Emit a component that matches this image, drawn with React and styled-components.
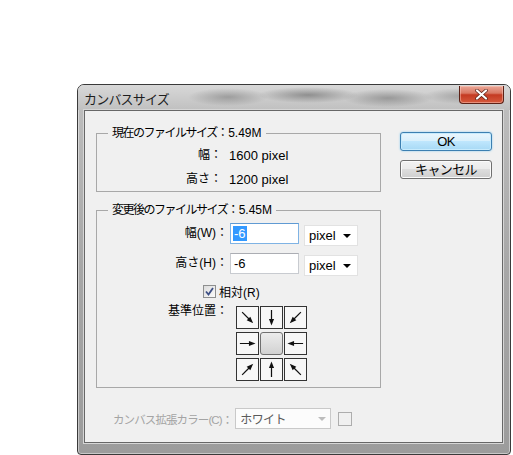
import React from "react";
import styled, { createGlobalStyle } from "styled-components";

const GlobalStyle = createGlobalStyle`
  html, body {
    margin: 0;
    padding: 0;
    background: #fff;
  }
  body {
    font-family: "Liberation Sans", "Noto Sans CJK JP", sans-serif;
    font-size: 12px;
    color: #000;
  }
`;

const Window = styled.div`
  margin: 84px 0 0 77px;
  width: 434px;
  height: 371px;
  box-sizing: border-box;
  border: 1px solid #3a3a3a;
  border-radius: 7px 7px 4px 4px;
  background: linear-gradient(to bottom, #d0d0d0 0, #bcbcbc 26px, #a7a7a7 50%, #9c9c9c 100%);
  box-shadow: inset 0 0 0 1px rgba(255, 255, 255, 0.45);
  display: flex;
  flex-direction: column;
  overflow: hidden;
`;

const TitleBar = styled.div`
  height: 25px;
  flex: none;
  display: flex;
  justify-content: space-between;
  align-items: flex-start;
  padding-left: 6px;
  background:
    radial-gradient(ellipse 40px 9px at 150px 12px, rgba(100, 100, 100, 0.45), transparent),
    radial-gradient(ellipse 50px 8px at 230px 10px, rgba(80, 80, 80, 0.5), transparent),
    radial-gradient(ellipse 45px 9px at 310px 13px, rgba(90, 90, 90, 0.45), transparent),
    radial-gradient(ellipse 40px 8px at 385px 11px, rgba(100, 100, 100, 0.4), transparent),
    linear-gradient(to bottom, #d8d8d8, #c0c0c0);
`;

const Title = styled.div`
  font-family: "Noto Sans CJK JP", sans-serif;
  font-size: 13px;
  line-height: 18px;
  padding-top: 5px;
  color: #1e1e1e;
  letter-spacing: -0.8px;
`;

const CloseButton = styled.div`
  width: 45px;
  height: 18px;
  margin: 1px 6px 0 0;
  box-sizing: border-box;
  border: 1px solid #5c2116;
  border-top: none;
  border-radius: 0 0 4px 4px;
  background: linear-gradient(to bottom, #eaa797 0%, #d97863 42%, #c43a22 52%, #d65a3d 100%);
  box-shadow: inset 0 0 0 1px rgba(255, 210, 200, 0.45);
  display: flex;
  align-items: center;
  justify-content: center;
`;

const Client = styled.div`
  flex: none;
  height: 333px;
  margin: 0 7px 0 6px;
  box-sizing: border-box;
  border: 1px solid #676767;
  box-shadow: 0 0 0 1px #d6d6d6;
  background: #f0f0f0;
  padding: 22px 0 0 11px;
  display: flex;
  flex-direction: column;
`;

const TopArea = styled.div`
  display: flex;
  align-items: flex-start;
  gap: 19px;
`;

const LeftColumn = styled.div`
  width: 285px;
  display: flex;
  flex-direction: column;
`;

const Group = styled.div`
  position: relative;
  box-sizing: border-box;
  height: ${(p) => p.$h}px;
  margin-top: ${(p) => p.$mt || 0}px;
  border: 1px solid #a8a8a8;
  padding-top: ${(p) => p.$pt}px;
`;

const Legend = styled.div`
  position: absolute;
  top: -8px;
  left: 11px;
  padding: 0 4px;
  background: #f0f0f0;
  line-height: 15px;
  white-space: nowrap;
`;

const Tight = styled.span`
  letter-spacing: -1.5px;
`;

const Number = styled.span`
  font-size: 12px;
  margin-left: 1px;
`;

const InfoRow = styled.div`
  display: grid;
  grid-template-columns: 125px auto;
  column-gap: 7px;
  height: 24px;
  align-items: center;
`;

const Value = styled.span`
  font-size: 13px;
`;

const Label = styled.div`
  text-align: right;
  white-space: nowrap;
  line-height: ${(p) => p.$lh || 15}px;
`;

const FormGrid = styled.div`
  display: grid;
  grid-template-columns: 131px 69px 57px;
  column-gap: 2px;
  row-gap: 7px;
  align-items: start;
`;

const TextInput = styled.div`
  height: 21px;
  box-sizing: border-box;
  border: 1px solid ${(p) => (p.$focus ? "#7fb3e4" : "#c8cbd0")};
  border-top-color: ${(p) => (p.$focus ? "#5f9ad3" : "#abadb3")};
  background: #fff;
  padding-left: 2px;
  display: flex;
  align-items: center;
`;

const InputText = styled.span`
  font-size: 13px;
  line-height: 15px;
  padding: 0 1px;
  color: ${(p) => (p.$sel ? "#fff" : "#000")};
  background: ${(p) => (p.$sel ? "#3399ff" : "transparent")};
`;

const Select = styled.div`
  margin: 2px 0 0 3px;
  width: 54px;
  height: 21px;
  box-sizing: border-box;
  border: 1px solid #e2e2e2;
  background: #fff;
  display: flex;
  align-items: center;
  justify-content: space-between;
  padding: 0 6px 0 4px;
  font-size: 13px;
`;

const Caret = styled.span`
  width: 0;
  height: 0;
  border-left: 4px solid transparent;
  border-right: 4px solid transparent;
  border-top: 4px solid ${(p) => p.$c || "#000"};
`;

const CheckRow = styled.div`
  grid-column: 1 / -1;
  height: 16px;
  padding-left: 106px;
  display: flex;
  align-items: center;
  gap: 3px;
`;

const CheckBox = styled.div`
  width: 13px;
  height: 13px;
  box-sizing: border-box;
  border: 1px solid #8e8f8f;
  background: linear-gradient(135deg, #dcdcdc, #fbfbfb);
  display: flex;
  align-items: center;
  justify-content: center;
`;

const AnchorLabel = styled(Label)`
  margin-top: -2px;
`;

const AnchorGrid = styled.div`
  grid-column: 2 / -1;
  margin-left: 6px;
  display: grid;
  grid-template-columns: repeat(3, 23px);
  grid-auto-rows: 23px;
  column-gap: 1px;
  row-gap: 3px;
`;

const Cell = styled.div`
  box-sizing: border-box;
  border: 1px solid ${(p) => (p.$center ? "#707070" : "#333")};
  border-radius: ${(p) => (p.$center ? "3px" : "0")};
  background: ${(p) => (p.$center ? "linear-gradient(to bottom, #ececec, #d2d2d2)" : "#f7f7f7")};
  display: flex;
  align-items: center;
  justify-content: center;
`;

const ButtonColumn = styled.div`
  width: 92px;
  margin-top: -1px;
  display: flex;
  flex-direction: column;
  gap: 9px;
`;

const Button = styled.div`
  height: 19px;
  box-sizing: border-box;
  border: 1px solid ${(p) => (p.$default ? "#3c7fb1" : "#707070")};
  border-radius: 3px;
  background: ${(p) =>
    p.$default
      ? "linear-gradient(to bottom, #eaf6fd 0%, #d9f0fc 45%, #bee6fd 50%, #a7d9f5 100%)"
      : "linear-gradient(to bottom, #f2f2f2 0%, #ebebeb 45%, #dddddd 50%, #cfcfcf 100%)"};
  box-shadow: ${(p) => (p.$default ? "0 0 2px #7ac6f0, inset 0 0 0 1px #c7ebfd" : "inset 0 0 0 1px #fbfbfb")};
  display: flex;
  align-items: center;
  justify-content: center;
  font-size: 13px;
  line-height: 15px;
  letter-spacing: -0.6px;
`;

const BottomRow = styled.div`
  margin-top: 20px;
  padding-left: 17px;
  display: flex;
  align-items: center;
  gap: 3px;
`;

const DisabledLabel = styled.div`
  color: #a4a4a4;
  font-size: 11.5px;
  letter-spacing: -0.9px;
  white-space: nowrap;
`;

const DisabledSelect = styled.div`
  width: 96px;
  height: 21px;
  box-sizing: border-box;
  border: 1px solid #c9c9c9;
  background: #fcfcfc;
  display: flex;
  align-items: center;
`;

const DisabledValue = styled.div`
  flex: 1;
  padding-left: 4px;
  color: #5a5a5a;
  letter-spacing: -0.6px;
`;

const DisabledArrow = styled.div`
  width: 17px;
  height: 100%;
  display: flex;
  align-items: center;
  justify-content: center;
`;

const Swatch = styled.div`
  width: 14px;
  height: 14px;
  margin-left: 4px;
  box-sizing: border-box;
  border: 1px solid #adadad;
  background: #f0f0f0;
`;

const Arrow = ({ deg }) => (
  <svg width="19" height="19" viewBox="0 0 20 20">
    <g transform={`rotate(${deg} 10 10)`}>
      <line x1="2" y1="10" x2="13" y2="10" stroke="#111" strokeWidth="1.3" />
      <polygon points="11.5,7.3 18.5,10 11.5,12.7" fill="#111" />
    </g>
  </svg>
);

const anchors = [45, 90, 135, 0, null, 180, -45, -90, -135];

const App = () => (
  <>
    <GlobalStyle />
    <Window>
      <TitleBar>
        <Title>カンバスサイズ</Title>
        <CloseButton>
          <svg width="13" height="11" viewBox="0 0 13 11">
            <path d="M2 1.5 L11 9.5 M11 1.5 L2 9.5" stroke="#5a2218" strokeWidth="3.6" strokeLinecap="round" />
            <path d="M2 1.5 L11 9.5 M11 1.5 L2 9.5" stroke="#fff" strokeWidth="2.2" strokeLinecap="round" />
          </svg>
        </CloseButton>
      </TitleBar>
      <Client>
        <TopArea>
          <LeftColumn>
            <Group $h={59} $pt={9}>
              <Legend>
                <Tight>現在のファイルサイズ：</Tight>
                <Number>5.49M</Number>
              </Legend>
              <InfoRow>
                <Label>幅：</Label>
                <Value>1600 pixel</Value>
              </InfoRow>
              <InfoRow>
                <Label>高さ：</Label>
                <Value>1200 pixel</Value>
              </InfoRow>
            </Group>
            <Group $h={178} $mt={18} $pt={12}>
              <Legend>
                <Tight>変更後のファイルサイズ：</Tight>
                <Number>5.45M</Number>
              </Legend>
              <FormGrid>
                <Label $lh={21}>幅(W)：</Label>
                <TextInput $focus>
                  <InputText $sel>-6</InputText>
                </TextInput>
                <Select>
                  pixel
                  <Caret />
                </Select>
                <Label $lh={21}>高さ(H)：</Label>
                <TextInput>
                  <InputText>-6</InputText>
                </TextInput>
                <Select>
                  pixel
                  <Caret />
                </Select>
                <CheckRow>
                  <CheckBox>
                    <svg width="9" height="9" viewBox="0 0 9 9">
                      <path d="M1 4.5 L3.5 7.5 L8 1" stroke="#3d4f85" strokeWidth="1.8" fill="none" />
                    </svg>
                  </CheckBox>
                  <span>相対(R)</span>
                </CheckRow>
                <AnchorLabel>基準位置：</AnchorLabel>
                <AnchorGrid>
                  {anchors.map((deg, i) => (
                    <Cell key={i} $center={deg === null}>
                      {deg !== null && <Arrow deg={deg} />}
                    </Cell>
                  ))}
                </AnchorGrid>
              </FormGrid>
            </Group>
          </LeftColumn>
          <ButtonColumn>
            <Button $default>OK</Button>
            <Button>キャンセル</Button>
          </ButtonColumn>
        </TopArea>
        <BottomRow>
          <DisabledLabel>カンバス拡張カラー(C)：</DisabledLabel>
          <DisabledSelect>
            <DisabledValue>ホワイト</DisabledValue>
            <DisabledArrow>
              <Caret $c="#bdbdbd" />
            </DisabledArrow>
          </DisabledSelect>
          <Swatch />
        </BottomRow>
      </Client>
    </Window>
  </>
);

export default App;
